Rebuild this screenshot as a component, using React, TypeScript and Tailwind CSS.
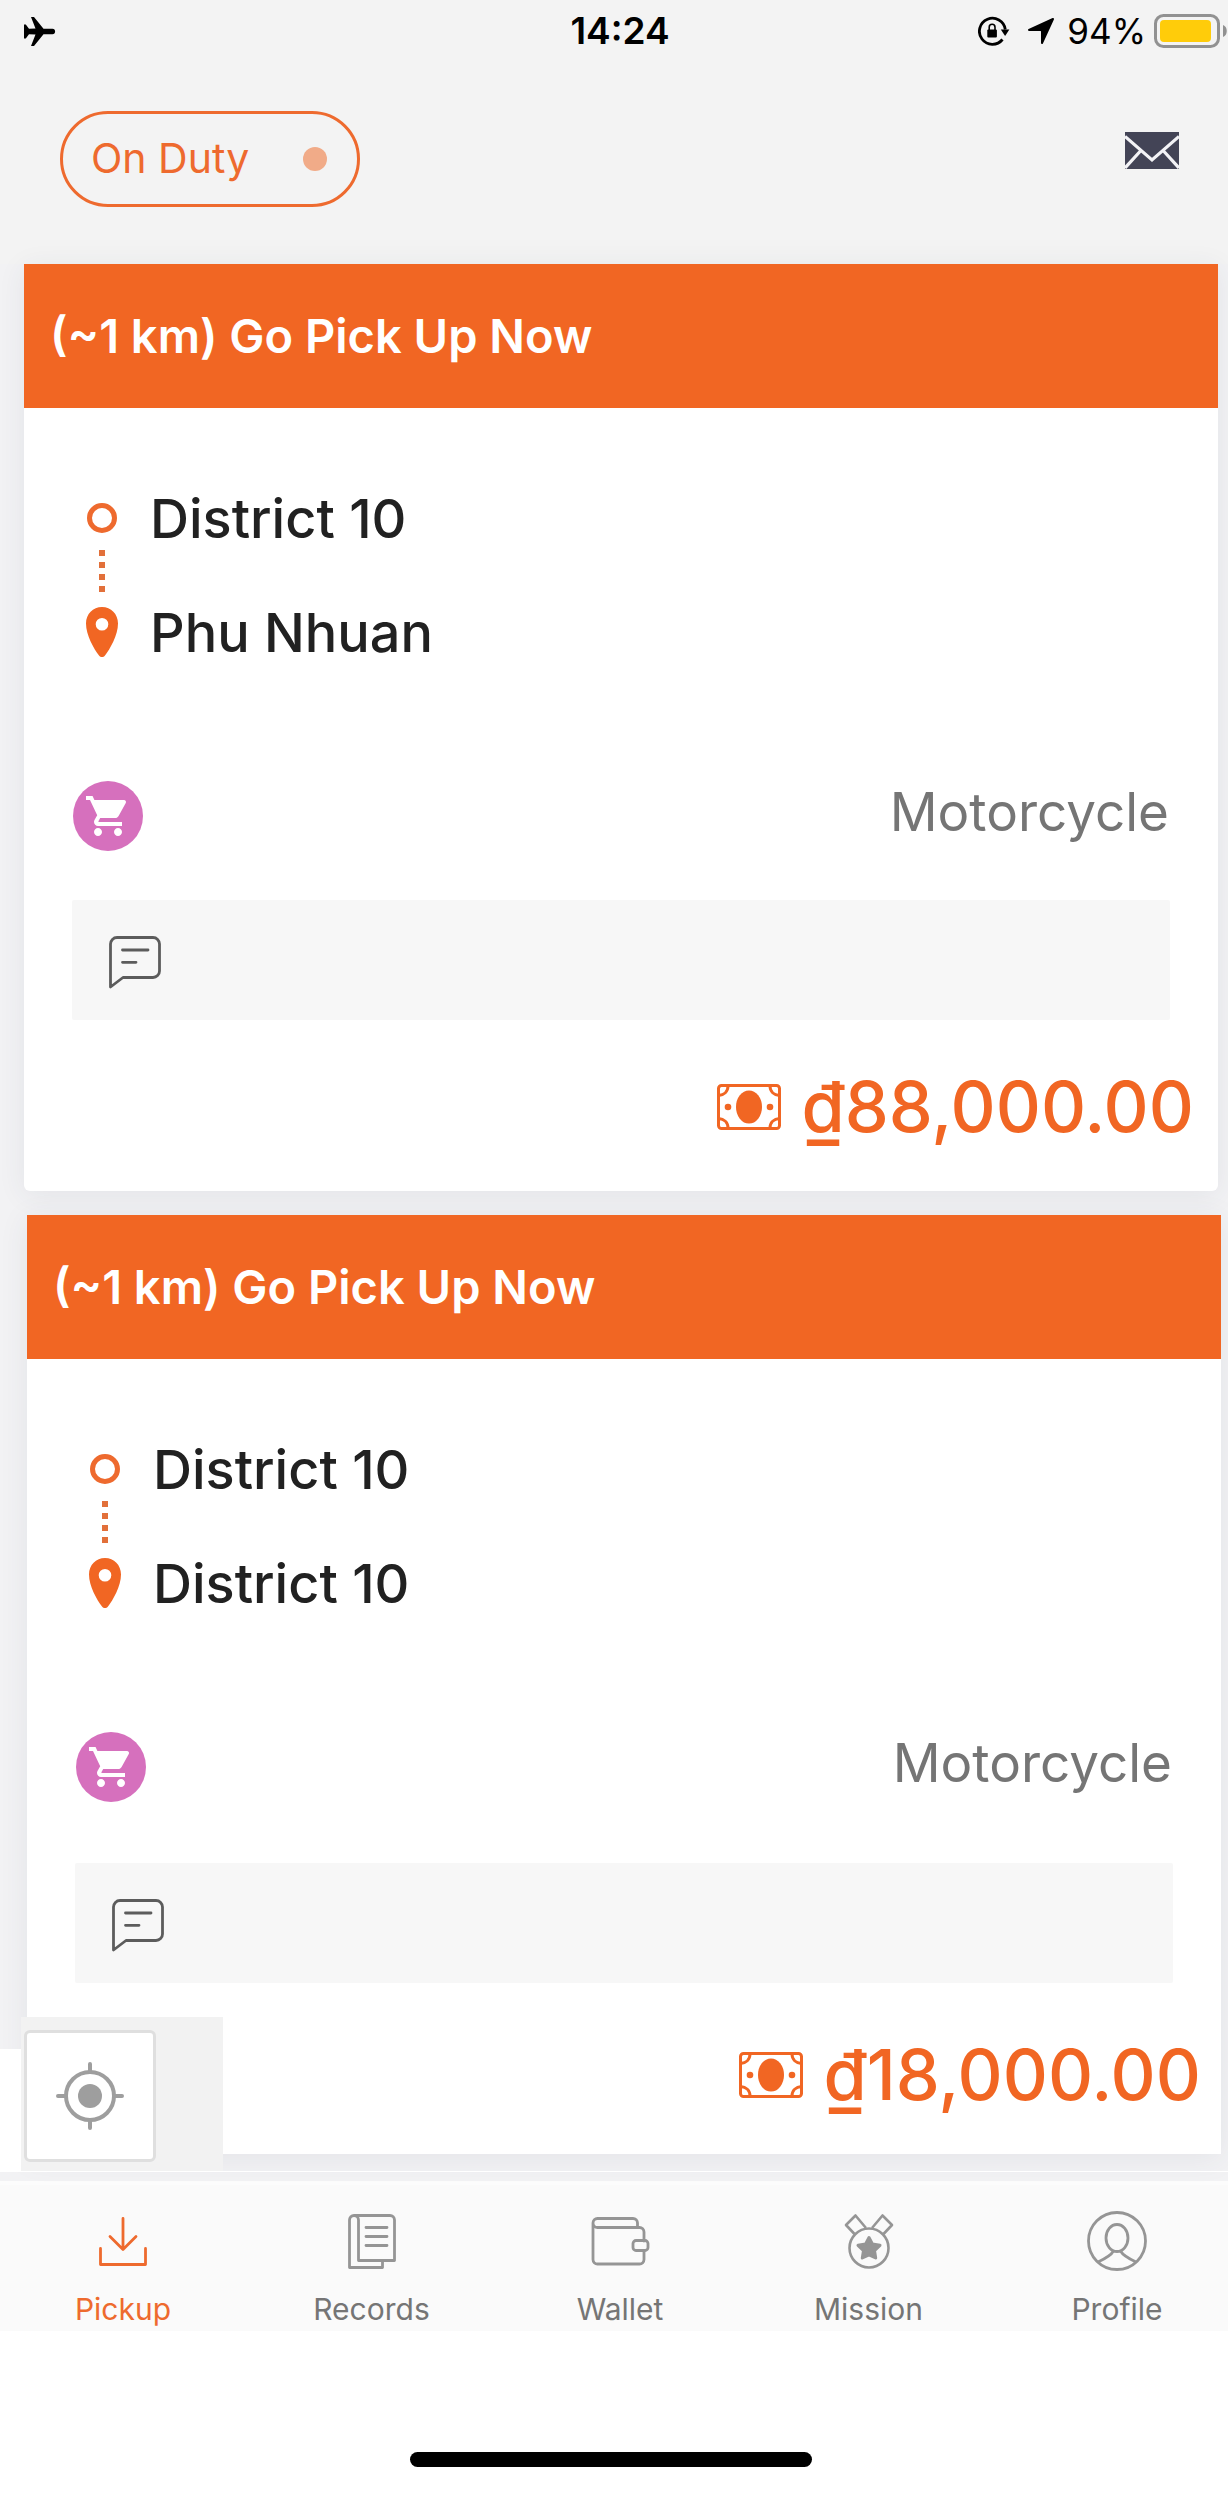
import React from 'react';
import { IoNavigate } from 'react-icons/io5';
import { MdShoppingCart } from 'react-icons/md';

type IconProps = { className?: string };

const AirplaneIcon = () => (
  <svg viewBox="0 0 32 29" className="ml-6 h-[29px] w-8" aria-hidden="true">
    <path d="M28.500 11.700c3.500 0 3.500 5.600 0 5.600H19.500L10 29H7l4.500-11.400L5 17.200 1.800 21.500H0v-14h1.800L5 11.800l6.500-.4L7 0h3l9.500 11.700z" />
  </svg>
);

const RotationLockIcon = () => (
  <svg viewBox="0 0 32 30" className="h-[30px] w-8" fill="none" aria-hidden="true">
    <path d="M24.500 23.500A13 13 0 1 1 27.300 13.500" stroke="black" strokeWidth="2.800" />
    <path d="M22.800 13.500h8.600l-4.300 6.500z" fill="black" />
    <rect x="9.300" y="13.500" width="9.600" height="8" rx="1" fill="black" />
    <path d="M11.200 14v-2.800a2.900 2.900 0 0 1 5.800 0V14" stroke="black" strokeWidth="1.600" />
  </svg>
);

const BatteryIcon = () => (
  <svg viewBox="0 0 74 34" className="h-[34px] w-[74px]" fill="none" aria-hidden="true">
    <rect x="1.500" y="1.500" width="63" height="31" rx="8" stroke="#919191" strokeWidth="3" />
    <rect x="6" y="6" width="51" height="22" rx="4" fill="#ffcc0a" />
    <path d="M69 11c5 1.500 5 10.500 0 12z" fill="#919191" />
  </svg>
);

const MailIcon = () => (
  <svg viewBox="0 0 54 37" className="h-[37px] w-[54px]" aria-hidden="true">
    <rect width="54" height="37" fill="#434456" />
    <path d="M0 4.500 27 28 54 4.500M0 36 15 19.500M54 36 39 19.500" fill="none" stroke="#f3f3f6" strokeWidth="3.200" />
  </svg>
);

const PinIcon = () => (
  <svg viewBox="0 0 32 50" className="h-[50px] w-8" aria-hidden="true">
    <path
      fillRule="evenodd"
      d="M16 0C7 0 0 7 0 16.500 0 28 8 42 13 48.500c1.700 2 4.300 2 6 0C24 42 32 28 32 16.500 32 7 25 0 16 0Zm0 11a6.300 6.300 0 1 1 0 12.600A6.300 6.300 0 0 1 16 11Z"
      fill="#f16623"
    />
  </svg>
);

const NoteIcon = () => (
  <svg viewBox="0 0 52 53" className="h-[53px] w-[52px]" fill="none" stroke="#5c5c5c" strokeWidth="2.800" strokeLinecap="round" strokeLinejoin="round" aria-hidden="true">
    <path d="M1.500 51V8a6.500 6.500 0 0 1 6.500-6.500h36A6.500 6.500 0 0 1 50.500 8v27a6.500 6.500 0 0 1-6.500 6.500H14z" />
    <path d="M13.500 14H39M13.500 26.300H27" />
  </svg>
);

const CashIcon = () => (
  <svg viewBox="0 0 64 46" className="h-[46px] w-16 shrink-0" fill="none" stroke="#f16623" strokeWidth="3" aria-hidden="true">
    <rect x="1.500" y="1.500" width="61" height="43" rx="3" />
    <path d="M11 2c0 5.500-4 9-9.500 9.500M53 2c0 5.500 4 9 9.500 9.500M11 44c0-5.500-4-9-9.500-9.500M53 44c0-5.500 4-9 9.500-9.500" />
    <ellipse cx="32" cy="23" rx="13" ry="16.500" fill="#f16623" stroke="none" />
    <circle cx="11" cy="23" r="3.300" fill="#f16623" stroke="none" />
    <circle cx="53" cy="23" r="3.300" fill="#f16623" stroke="none" />
  </svg>
);

const LocateIcon = () => (
  <svg viewBox="0 0 68 68" className="size-[68px]" fill="none" stroke="#9e9e9e" strokeWidth="4" strokeLinecap="round" aria-hidden="true">
    <circle cx="34" cy="34" r="24" />
    <circle cx="34" cy="34" r="12" fill="#9e9e9e" stroke="none" />
    <path d="M34 2v8M34 58v8M2 34h8M58 34h8" />
  </svg>
);

const PickupIcon = ({ className }: IconProps) => (
  <svg viewBox="0 0 60 60" className={className} fill="none" stroke="currentColor" strokeWidth="2.800" strokeLinecap="round" strokeLinejoin="round" aria-hidden="true">
    <path d="M30 7.500V38M17 25.500 30 38.500l13-13M7.500 37.500v16h45v-16" />
  </svg>
);

const RecordsIcon = ({ className }: IconProps) => (
  <svg viewBox="0 0 60 60" className={className} fill="none" stroke="currentColor" strokeWidth="2.800" strokeLinecap="round" strokeLinejoin="round" aria-hidden="true">
    <path d="M16.500 49.500h36V9a4.500 4.500 0 0 0-4.500-4.500H12A4.500 4.500 0 0 0 7.500 9v47.500h33v-7M16.500 49.500V9A4.500 4.500 0 0 0 12 4.500" />
    <path d="M24 16.500h21M24 25.500h21M24 34.500h21" />
  </svg>
);

const WalletIcon = ({ className }: IconProps) => (
  <svg viewBox="0 0 60 60" className={className} fill="none" stroke="currentColor" strokeWidth="2.800" strokeLinecap="round" strokeLinejoin="round" aria-hidden="true">
    <path d="M54 30v-9a4.500 4.500 0 0 0-4.500-4.500h-42a4.500 4.500 0 0 1 0-9h35.500a4.500 4.500 0 0 1 4.500 4.500v4.500M3 12v36.500A4.500 4.500 0 0 0 7.500 53h42a4.500 4.500 0 0 0 4.500-4.500V39.500" />
    <rect x="43" y="29.500" width="15" height="10" rx="3" />
  </svg>
);

const MissionIcon = ({ className }: IconProps) => (
  <svg viewBox="0 0 60 60" className={className} fill="none" stroke="currentColor" strokeWidth="2.600" strokeLinejoin="round" aria-hidden="true">
    <circle cx="30" cy="37" r="19.500" />
    <path d="m27 17-10.500-12.500-9.500 9.500 8.500 9M33 17l10.500-12.500 9.500 9.500-8.500 9" />
    <path
      d="m30 26.500 3.400 6.500 7.600 1.300-5.500 5.300 1.200 7.400-6.700-3.200-6.700 3.200 1.200-7.400-5.500-5.300 7.600-1.300z"
      fill="currentColor"
      strokeWidth="3"
    />
  </svg>
);

const ProfileIcon = ({ className }: IconProps) => (
  <svg viewBox="0 0 60 60" className={className} fill="none" stroke="currentColor" strokeWidth="2.800" aria-hidden="true">
    <circle cx="30" cy="30" r="28.500" />
    <ellipse cx="30" cy="27" rx="11" ry="13.500" />
    <path d="M26.500 40c-2.500 4.500-8 7.500-15.500 11M33.500 40c2.500 4.500 8 7.500 15.500 11" />
  </svg>
);

type Order = {
  id: number;
  from: string;
  to: string;
  price: string;
  card: string;
  note: string;
  total: string;
};

const orders: Order[] = [
  {
    id: 1,
    from: 'District 10',
    to: 'Phu Nhuan',
    price: '₫88,000.00',
    card: 'ml-6 mr-2.5 rounded-b-md',
    note: 'mt-[49px]',
    total: 'mt-[45px] pb-[42px] pr-6',
  },
  {
    id: 2,
    from: 'District 10',
    to: 'District 10',
    price: '₫18,000.00',
    card: 'ml-[27px] mr-[7px]',
    note: 'mt-[61px]',
    total: 'mt-[50px] pb-[37px] pr-5',
  },
];

const OrderCard = ({ order }: { order: Order }) => (
  <article className={`bg-white shadow-[0_4px_28px_rgba(50,60,90,0.08)] ${order.card}`}>
    <h2 className="flex h-36 items-center bg-[#f16623] px-[26px] text-[47px] font-semibold text-white">
      (~1 km) Go Pick Up Now
    </h2>

    {/* Route */}
    <div className="px-[60px] pt-[78px] text-[54px] font-medium text-[#212121]">
      <div className="flex h-16 items-center gap-[30px]">
        <span className="flex w-9 justify-center">
          <span className="size-[30px] rounded-full border-5 border-[#ee6a2e]"></span>
        </span>
        {order.from}
      </div>
      <div className="flex h-[50px] w-9 flex-col items-center gap-1.5">
        <span className="size-1.5 bg-[#e2703a]"></span>
        <span className="size-1.5 bg-[#e2703a]"></span>
        <span className="size-1.5 bg-[#e2703a]"></span>
        <span className="size-1.5 bg-[#e2703a]"></span>
      </div>
      <div className="flex h-16 items-center gap-[30px]">
        <span className="flex w-9 justify-center">
          <PinIcon />
        </span>
        {order.to}
      </div>
    </div>

    {/* Service */}
    <div className="mt-[117px] flex justify-between px-[49px]">
      <span className="flex size-[70px] items-center justify-center rounded-full bg-[#d670bd]">
        <MdShoppingCart className="size-12 text-white" />
      </span>
      <span className="text-[53px] leading-[62px] text-[#757575]">Motorcycle</span>
    </div>

    <div className={`mx-12 flex h-[120px] items-center rounded-xs bg-[#f7f7f7] px-[37px] pt-1 ${order.note}`}>
      <NoteIcon />
    </div>

    <div className={`flex items-center justify-end gap-5 ${order.total}`}>
      <CashIcon />
      <span className="text-[70px] leading-[84px] font-medium text-[#f16623]">{order.price}</span>
    </div>
  </article>
);

const tabs = [
  { label: 'Pickup', Icon: PickupIcon, active: true },
  { label: 'Records', Icon: RecordsIcon },
  { label: 'Wallet', Icon: WalletIcon },
  { label: 'Mission', Icon: MissionIcon },
  { label: 'Profile', Icon: ProfileIcon },
];

const App = () => {
  return (
    <div className="min-h-screen bg-white font-['Inter',sans-serif]">
      <div className="bg-[#f3f3f3]">
        {/* Status bar */}
        <div className="grid h-[62px] grid-cols-3 items-center text-[35px] text-black">
          <AirplaneIcon />
          <span className="pl-3 text-center text-[37px] font-semibold">14:24</span>
          <div className="flex items-center justify-end">
            <RotationLockIcon />
            <IoNavigate className="mr-2.5 ml-[15px] size-8" />
            <span className="mr-2">94%</span>
            <BatteryIcon />
          </div>
        </div>

        <header className="flex items-start justify-between pt-[49px] pr-[49px] pb-[57px] pl-[60px]">
          <button className="flex h-24 w-[300px] items-center justify-between rounded-full border-3 border-[#ee6a2e] pr-[30px] pl-7 text-[41px] text-[#ee6a2e]">
            On Duty
            <span className="size-6 rounded-full bg-[#f1ab88]"></span>
          </button>
          <button className="flex h-[78px] items-center" aria-label="Messages">
            <MailIcon />
          </button>
        </header>
      </div>

      <main className="relative bg-[#f2f2f4] pb-[27px]">
        <div className="flex flex-col gap-6">
          {orders.map((order) => (
            <OrderCard key={order.id} order={order} />
          ))}
        </div>

        {/* Locate button over the last card */}
        <div className="absolute inset-x-0 bottom-[9px] flex border-b border-white">
          <div className="mt-8 w-[21px] bg-white"></div>
          <div className="w-[202px] bg-[#f2f2f2] pt-[13px] pb-[9px] pl-[3px]">
            <button
              className="flex size-[132px] items-center justify-center rounded-md border-3 border-[#dfdfdf] bg-white"
              aria-label="My location"
            >
              <LocateIcon />
            </button>
          </div>
        </div>
      </main>

      <nav className="flex h-[150px] justify-between border-t-4 border-[#fcfcfc] bg-[#fafafa] pt-[26px] pr-[41px] pl-[53px]">
        {tabs.map(({ label, Icon, active }) => (
          <a
            key={label}
            href="#"
            className={`flex w-[140px] flex-col items-center gap-[18px] text-[30px] leading-10 ${active ? 'text-[#ee6a2e]' : 'text-[#757575]'}`}
          >
            <Icon className={active ? 'size-[60px] shrink-0' : 'size-[60px] shrink-0 text-[#959595]'} />
            {label}
          </a>
        ))}
      </nav>

      {/* Home indicator */}
      <div className="flex justify-center pt-[121px] pr-1.5 pb-8">
        <div className="h-[15px] w-[402px] rounded-full bg-black"></div>
      </div>
    </div>
  );
};

export default App;
